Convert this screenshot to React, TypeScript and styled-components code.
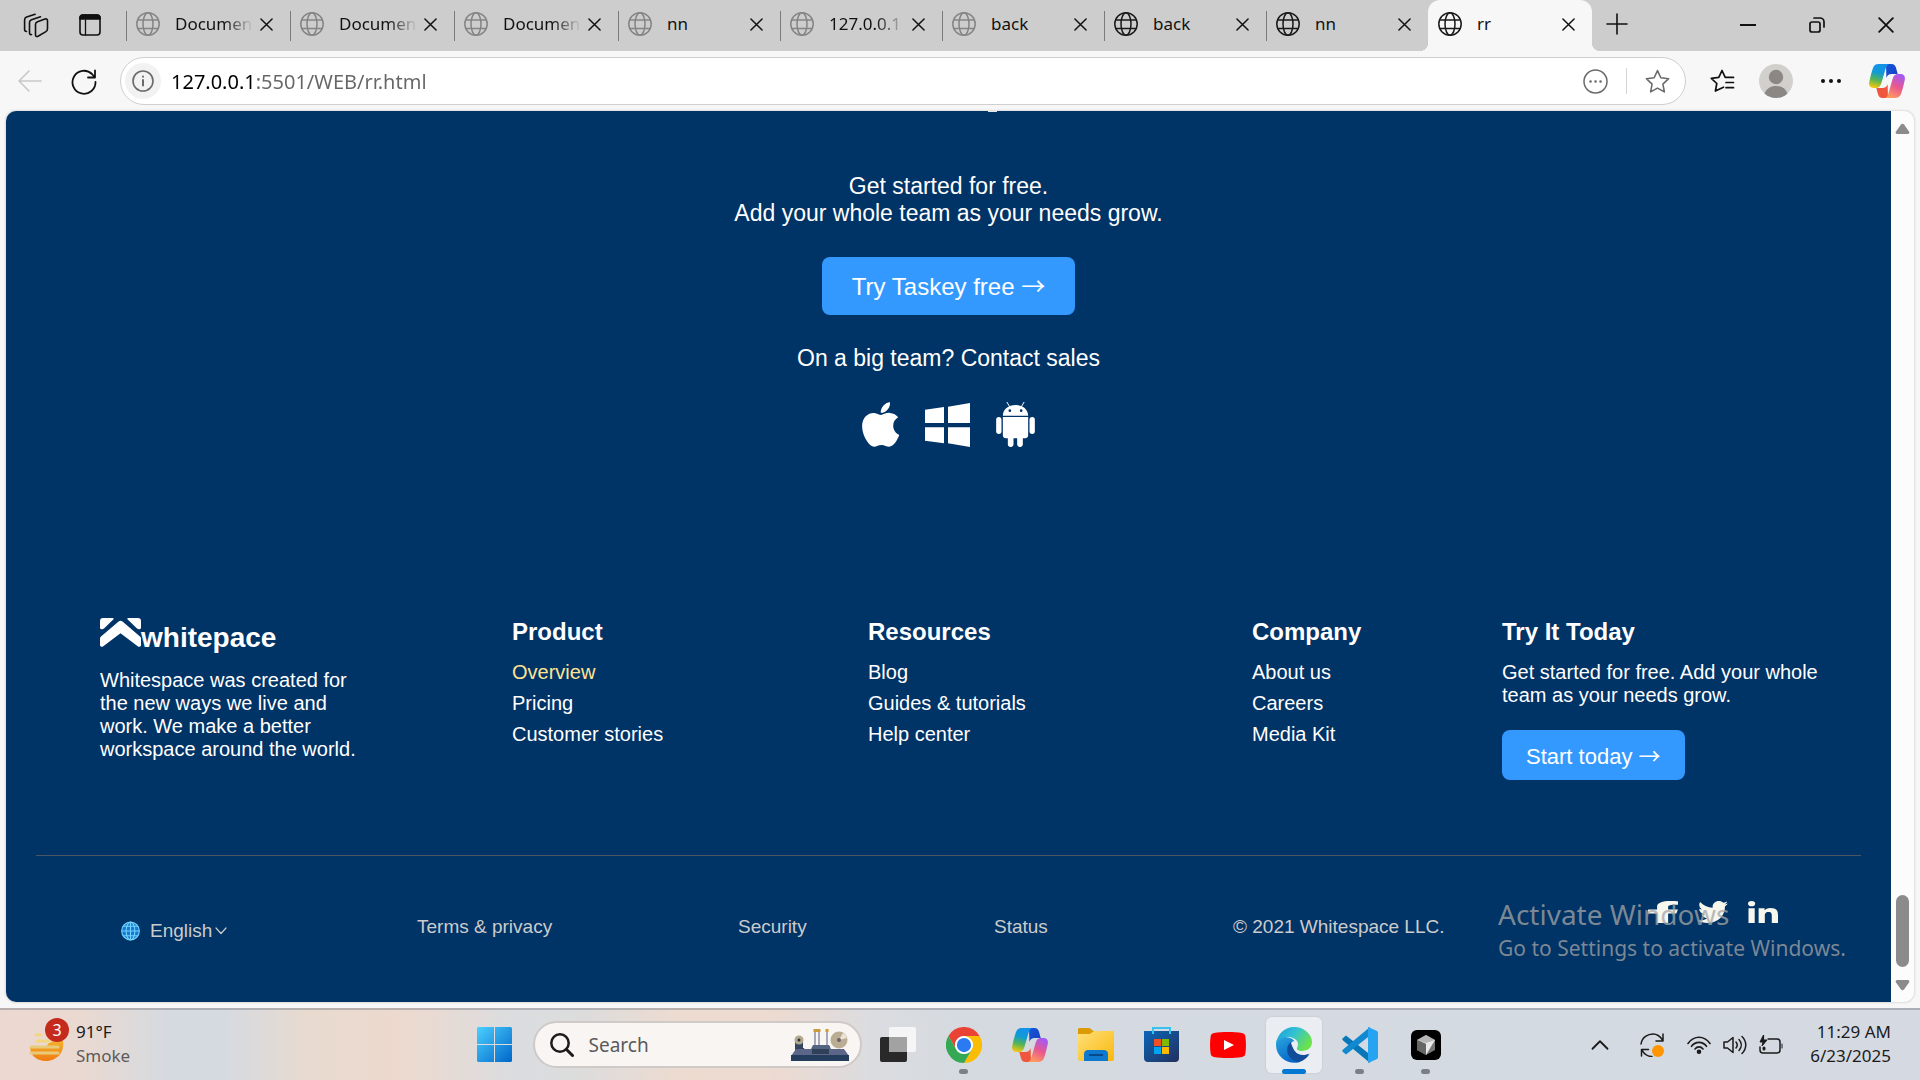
import React from "react";
import styled, { createGlobalStyle, css } from "styled-components";
import { FaApple, FaFacebookF, FaLinkedinIn, FaTwitter } from "react-icons/fa";

const ui = `"Noto Sans", "Open Sans", sans-serif`;
const web = `"Liberation Sans", Arial, sans-serif`;

const GlobalStyle = createGlobalStyle`
  *, *::before, *::after { box-sizing: border-box; }
  body { margin: 0; background: #f7f7f7; font-family: ${ui}; }
  button, input, select { font: inherit; color: inherit; margin: 0; padding: 0; border: 0; background: none; }
  h3, p, ul { margin: 0; padding: 0; }
  ul { list-style: none; }
  a { color: inherit; text-decoration: none; }
  svg { display: block; flex: none; }
`;

const Screen = styled.div`
  display: flex;
  flex-direction: column;
  height: 100vh;
  overflow: hidden;
`;

const IconButton = styled.button<{ $w?: number; $h?: number }>`
  display: grid;
  place-items: center;
  flex: none;
  width: ${(p) => p.$w ?? 24}px;
  height: ${(p) => p.$h ?? 24}px;
`;

/* ---------- tab strip ---------- */

const TabStrip = styled.header`
  display: flex;
  flex: none;
  height: 51px;
  background: #cdcdcd;
  color: #111;
`;

const StripTools = styled.div`
  display: flex;
  width: 126px;
  padding: 0 0 2px 9px;
  align-items: center;
`;

const Tab = styled.div<{ $wide?: boolean; $active?: boolean }>`
  position: relative;
  display: flex;
  align-items: center;
  width: ${(p) => (p.$wide ? 164 : 162)}px;
  padding: 0 13px 3px 10px;
  font-size: 17px;
  line-height: 24px;
  &::before {
    content: "";
    position: absolute;
    left: 0;
    top: 11px;
    width: 1px;
    height: 30px;
    background: #7b7b7b;
  }
  ${(p) =>
    p.$active &&
    css`
      background: #f7f7f7;
      border-radius: 12px 12px 0 0;
      &::before, &::after {
        content: "";
        position: absolute;
        top: auto;
        bottom: 0;
        width: 8px;
        height: 8px;
      }
      &::before {
        left: -8px;
        background: radial-gradient(circle at 0 0, transparent 8px, #f7f7f7 8px);
      }
      &::after {
        right: -8px;
        background: radial-gradient(circle at 100% 0, transparent 8px, #f7f7f7 8px);
      }
    `}
`;

const TabTitle = styled.span<{ $fade?: boolean }>`
  flex: 1;
  min-width: 0;
  margin-left: 15px;
  overflow: hidden;
  white-space: nowrap;
  ${(p) => p.$fade && css`mask-image: linear-gradient(90deg, #000 60%, transparent 98%);`}
`;

const NewTab = styled(IconButton)`
  margin: 12px 0 0 13px;
`;

const WindowControls = styled.div`
  display: flex;
  margin-left: auto;
`;

/* ---------- toolbar ---------- */

const Toolbar = styled.div`
  display: flex;
  flex: none;
  align-items: center;
  height: 60px;
  background: #f7f7f7;
  color: #111;
`;

const AddressBar = styled.form`
  display: flex;
  flex: 1;
  align-items: center;
  height: 48px;
  margin-left: 13px;
  padding: 0 10px 0 4px;
  border: 1px solid #cfcfcf;
  border-radius: 24px;
  background: #fff;
  color: #6a6a6a;
`;

const SiteInfo = styled(IconButton)`
  border-radius: 50%;
  background: #f2f2f2;
`;

const Address = styled.input`
  flex: 1;
  min-width: 0;
  height: 36px;
  margin-left: 10px;
  color: #666;
  font-size: 20px;
  outline: none;
  background: linear-gradient(90deg, #000 81px, #666 81px);
  background-clip: text;
  -webkit-background-clip: text;
  -webkit-text-fill-color: transparent;
`;

const AddressDivider = styled.span`
  width: 1px;
  height: 26px;
  margin: 0 12px 0 12px;
  background: #d5d5d5;
`;

const ToolbarEnd = styled.div`
  display: flex;
  align-items: center;
  gap: 19px;
  margin: 0 15px 0 18px;
`;

/* ---------- page ---------- */

const Viewport = styled.main`
  position: relative;
  display: flex;
  flex: 1;
  min-height: 0;
  margin: 0 6px 6px;
  border-radius: 10px;
  overflow: hidden;
  background: #fcfcfc;
  box-shadow: 0 0 2px 1px #dcdcdc;
`;

const Page = styled.div`
  flex: 1;
  min-width: 0;
  background: #003366;
  color: #fff;
  font-family: ${web};
`;

const HeadingTail = styled.div`
  width: 9px;
  height: 1px;
  margin-left: calc(50% + 39px);
  background: #dfe6ec;
`;

const Hero = styled.section`
  display: flex;
  flex-direction: column;
  align-items: center;
  padding-top: 61px;
  font-size: 23px;
  line-height: 27px;
  text-align: center;
`;

const Arrow = styled.span`
  font-family: "Noto Sans CJK SC", ${web};
  line-height: 1;
`;

const HeroButton = styled.button`
  height: 58px;
  margin: 30px 0 30px;
  padding: 0 30px;
  border-radius: 8px;
  background: #3399ff;
  font-size: 24px;
`;

const Platforms = styled.div`
  display: flex;
  align-items: center;
  gap: 26px;
  margin-top: 30px;
  svg:first-child { width: 37px; height: 45px; }
`;

const FooterGrid = styled.footer`
  display: grid;
  grid-template-columns: 412fr 356fr 384fr 250fr 389fr;
  align-items: start;
  margin-top: 171px;
  padding-left: 94px;
  font-size: 20px;
  line-height: 23px;
`;

const Brand = styled.div`
  display: flex;
  height: 37px;
  margin-bottom: 14px;
  font-size: 28px;
  font-weight: 700;
  line-height: 40px;
`;

const About = styled.p`
  max-width: 270px;
`;

const ColumnTitle = styled.h3`
  margin-bottom: 16px;
  font-size: 24px;
  line-height: 27px;
`;

const Links = styled.ul`
  display: grid;
  gap: 8px;
`;

const FooterLink = styled.a<{ $current?: boolean }>`
  color: ${(p) => (p.$current ? "#ffe492" : "#fff")};
`;

const Pitch = styled.p`
  max-width: 340px;
`;

const StartButton = styled.button`
  height: 50px;
  margin-top: 23px;
  padding: 0 24px;
  border-radius: 8px;
  background: #3399ff;
  font-size: 22px;
`;

const Legal = styled.div`
  display: grid;
  grid-template-columns: 296fr 321fr 256fr 239fr 415fr 213fr;
  align-items: start;
  margin: 75px 30px 0;
  padding: 45px 0 0 85px;
  border-top: 1px solid #4a5663;
  color: #ccc;
  font-size: 19px;
  line-height: 22px;
`;

const LegalItem = styled.div`
  padding-top: 15px;
`;

const Language = styled.label`
  display: flex;
  align-items: center;
  gap: 10px;
  padding-top: 19px;
  svg:last-child { margin-left: -8px; }
`;

const LanguageSelect = styled.select`
  appearance: none;
`;

const Social = styled.div`
  display: flex;
  gap: 20px;
  color: #f7f7ee;
  svg { height: 22px; width: 30px; }
`;

const Watermark = styled.div`
  position: absolute;
  right: 74px;
  bottom: 38px;
  width: 342px;
  color: rgba(165, 165, 165, 0.75);
  font-size: 28px;
  line-height: 36px;
  white-space: nowrap;
  pointer-events: none;
`;

const WatermarkHint = styled.div`
  font-size: 21px;
  line-height: 32px;
`;

const ScrollTrack = styled.div`
  display: flex;
  flex-direction: column;
  align-items: center;
  flex: none;
  width: 23px;
  padding: 9px 0;
  color: #8b8b8b;
`;

const ScrollThumb = styled.div`
  width: 13px;
  height: 72px;
  margin: auto 0 12px;
  border-radius: 7px;
  background: #8b8b8b;
`;

/* ---------- taskbar ---------- */

const Taskbar = styled.footer`
  display: grid;
  grid-template-columns: 1fr auto 1fr;
  align-items: center;
  flex: none;
  height: 72px;
  border-top: 2px solid rgba(120, 125, 130, 0.45);
  background: linear-gradient(90deg, #ecd8d0 0, #ead9d1 80px, #d5dae0 170px, #d5dae1 220px,
    #e8dacf 310px, #edd9ce 400px, #dadde0 520px, #dcdcdc 580px, #eddbd0 680px, #eddad0 770px,
    #dadce0 880px, #d4dae0 980px, #d5dae2 100%);
  background-clip: border-box;
  color: #1b1b1b;
  font-size: 17px;
  line-height: 24px;
`;

const Weather = styled.button`
  display: flex;
  align-items: center;
  gap: 4px;
  justify-self: start;
  margin-left: 28px;
  padding-bottom: 3px;
  text-align: left;
`;

const Muted = styled.div`
  color: #5c5c5c;
`;

const Dock = styled.nav`
  display: flex;
  align-items: center;
  padding-bottom: 1px;
`;

const DockItem = styled.button<{ $active?: boolean; $running?: boolean }>`
  position: relative;
  display: grid;
  place-items: center;
  width: 56px;
  height: 56px;
  margin: 0 5px;
  border-radius: 6px;
  ${(p) => p.$active && css`background: #eaedf2; box-shadow: 0 0 1px 1px #cdd1d8;`}
  ${(p) =>
    (p.$active || p.$running) &&
    css`
      &::after {
        content: "";
        position: absolute;
        bottom: -1px;
        width: ${p.$active ? 24 : 9}px;
        height: 5px;
        border-radius: 3px;
        background: ${p.$active ? "#0078d4" : "#7c7f83"};
      }
    `}
`;

const SearchBox = styled.label`
  display: flex;
  align-items: center;
  width: 329px;
  height: 47px;
  margin: 0 3px 0 5px;
  padding: 0 11px 0 15px;
  border: 2px solid #cfcac8;
  border-radius: 24px;
  background: #f8f5f3;
`;

const SearchInput = styled.input`
  flex: 1;
  min-width: 0;
  margin-left: 15px;
  font-size: 19px;
  outline: none;
  &::placeholder { color: #5a5a5a; opacity: 1; }
`;

const Tray = styled.div`
  display: flex;
  align-items: center;
  justify-self: end;
  gap: 12px;
  margin-right: 29px;
`;

const Clock = styled.time`
  margin-left: 15px;
  padding-bottom: 2px;
  text-align: right;
`;

/* ---------- drawings ---------- */

const line = { fill: "none", stroke: "currentColor", strokeLinecap: "round", strokeLinejoin: "round" } as const;

const Globe = ({ color = "#1a1a1a", size = 24 }: { color?: string; size?: number }) => (
  <svg width={size} height={size} viewBox="0 0 24 24" fill="none" stroke={color} strokeWidth="1.5">
    <circle cx="12" cy="12" r="11.2" />
    <ellipse cx="12" cy="12" rx="5" ry="11.2" />
    <path d="M1.7 8h20.6M1.7 16.4h20.6" />
  </svg>
);

const CloseIcon = ({ size = 14 }: { size?: number }) => (
  <svg width={size} height={size} viewBox="0 0 14 14" {...line} strokeWidth="1.6">
    <path d="M1 1l12 12M13 1L1 13" />
  </svg>
);

const Workspaces = () => (
  <svg width="26" height="26" viewBox="0 0 26 26" {...line} strokeWidth="1.6">
    <path d="M12.500 11.500c0-1.400.7-2.300 2-2.800l7.500-2.700c1.600-.5 2.500.2 2.500 1.700v8c0 1.500-.6 2.500-2 3.200l-7.500 4.300c-1.600.8-2.500.2-2.500-1.500z" />
    <path d="M8.500 21.500c-1.300.3-2-.3-2-1.700V9.500c0-1.500.6-2.300 2-2.800l9-3" />
    <path d="M3.500 18.500c-1.300 0-1.900-.6-1.900-1.900V7c0-1.500.6-2.400 2-2.900l8.500-2.900" />
  </svg>
);

const TabActions = () => (
  <svg width="22" height="22" viewBox="0 0 22 22" {...line} strokeWidth="1.6">
    <rect x="1" y="1" width="20" height="20" rx="3" />
    <path d="M1 5V4a3 3 0 013-3h14a3 3 0 013 3v1z" fill="currentColor" />
    <path d="M6.500 6v15" strokeWidth="1.300" />
  </svg>
);

const STAR = "M12 1.500l3.200 6.900 7.500.9-5.500 5.200 1.400 7.500L12 18.300 5.400 22l1.400-7.500L1.300 9.300l7.500-.9z";

const CopilotLogo = ({ id }: { id: string }) => (
  <svg width="36" height="34" viewBox="0 0 36 34">
    <defs>
      <linearGradient id={`${id}a`} x1="0.500" y1="0" x2="0.300" y2="1">
        <stop offset="0" stopColor="#1591ea" />
        <stop offset=".35" stopColor="#109bd5" />
        <stop offset=".65" stopColor="#50b35a" />
        <stop offset="1" stopColor="#f8c70a" />
      </linearGradient>
      <linearGradient id={`${id}b`} x1="0.700" y1="0" x2="0.300" y2="1">
        <stop offset="0" stopColor="#a259f5" />
        <stop offset=".5" stopColor="#e9588f" />
        <stop offset="1" stopColor="#ff9c5c" />
      </linearGradient>
      <linearGradient id={`${id}c`} x1="0" y1="0" x2="1" y2="1">
        <stop offset="0" stopColor="#1456d9" />
        <stop offset="1" stopColor="#1b3fc0" />
      </linearGradient>
    </defs>
    <path d="M17 0h5.500c2.500 0 3.800 1.400 4.500 3.700L28.700 10h-6c-3 0-4.500 1.200-5.300 4z" fill={`url(#${id}c)`} />
    <path d="M19 34h-5.500c-2.500 0-3.800-1.400-4.500-3.700L7.300 24h6c3 0 4.500-1.200 5.300-4z" fill="#f0553d" />
    <path d="M9.500 0H20c-2 .8-2.800 2.500-3.600 5.300L12.700 18c-1 3.800-2.400 6-5.700 6H4.500C.8 24-.5 21.300.3 17.700 1.200 13.500 2.400 8.500 3.800 4.400 4.800 1.500 6.500 0 9.500 0z" fill={`url(#${id}a)`} />
    <path d="M26.500 34H16c2-.8 2.800-2.500 3.600-5.300L23.300 16c1-3.800 2.400-6 5.700-6h2.500c3.700 0 5 2.700 4.200 6.300-.9 4.200-2.100 9.200-3.500 13.300-1 2.900-2.700 4.400-5.700 4.400z" fill={`url(#${id}b)`} />
  </svg>
);

const WindowsGlyph = () => (
  <svg width="45" height="44" viewBox="0 0 135 132" fill="currentColor">
    <path d="M0 20l57-8v48H0zM69 11L135 0v60H69zM0 73h57v48L0 113zM69 73h66v59L69 121z" />
  </svg>
);

const AndroidGlyph = () => (
  <svg width="39" height="45" viewBox="0 0 116 135" fill="currentColor">
    <path d="M32 0l9 15M84 0l-9 15" stroke="currentColor" strokeWidth="3" />
    <path d="M20 41C20 22 37 9 58 9s38 13 38 32zM41 22a4 4 0 100 8 4 4 0 000-8zm34 0a4 4 0 100 8 4 4 0 000-8z" fillRule="evenodd" />
    <path d="M20 45h76v55c0 5-4 9-9 9h-7v18c0 11-17 11-17 0v-18H52v18c0 11-17 11-17 0v-18h-6c-5 0-9-4-9-9z" />
    <rect y="45" width="16" height="51" rx="8" />
    <rect x="100" y="45" width="16" height="51" rx="8" />
  </svg>
);

const BrandMark = () => (
  <svg width="41" height="29" viewBox="0 0 41 29" fill="currentColor">
    <path d="M0 3a3 3 0 013-3h9.500c1.400 0 1.600.8.800 1.600L4 10.500C3 11.600 0 12 0 9.500zM41 3a3 3 0 00-3-3h-9.500c-1.400 0-1.600.8-.8 1.600l9.300 8.900c1 1.100 4 1.500 4-1z" />
    <path d="M18.600 3.600a3 3 0 013.900 0L40 18.400c.7.600 1 1.200 1 2V27c0 1.700-1.800 2.500-3.300 1.300L20.500 15.200 3.300 28.300C1.800 29.500 0 28.700 0 27v-6.600c0-.8.300-1.400 1-2z" />
  </svg>
);

const WebGlobe = () => (
  <svg width="19" height="20" viewBox="0 0 20 20" fill="#1976d2" stroke="#6fd3fb" strokeWidth="1.200">
    <circle cx="10" cy="10" r="9.300" />
    <ellipse cx="10" cy="10" rx="4.600" ry="9.300" />
    <path d="M10 .7v18.600M.7 10h18.600M2.500 5h15M2.500 15h15" />
  </svg>
);

const Chevron = ({ up, size = 12 }: { up?: boolean; size?: number }) => (
  <svg width={size} height={(size * 2) / 3} viewBox="0 0 12 8" {...line} strokeWidth="1.200">
    <path d={up ? "M1 6.500l5-5 5 5" : "M1 1l5 5.500L11 1"} />
  </svg>
);

const WeatherIcon = () => (
  <svg width="44" height="52" viewBox="0 0 44 52">
    <defs>
      <linearGradient id="sun" x1="0" y1="0" x2="0" y2="1">
        <stop offset="0" stopColor="#f5b12a" />
        <stop offset="1" stopColor="#ef7a13" />
      </linearGradient>
    </defs>
    <path d="M2 30l17-2c1-4 5-5 16-5 2 13-8 20-17 20C9 43 3 38 2 30z" fill="url(#sun)" />
    <g stroke="#f3d680" strokeWidth="3" strokeLinecap="round">
      <path d="M8 17h5M9 23h12" />
      <path d="M3 29h27M3 35h27" stroke="#e8cb7a" />
    </g>
    <circle cx="29" cy="12" r="12" fill="#c42b1c" />
    <text x="29" y="18" fill="#fff" fontSize="16" textAnchor="middle" fontFamily="Noto Sans">3</text>
  </svg>
);

const StartLogo = () => (
  <svg width="35" height="35" viewBox="0 0 35 35">
    <defs>
      <linearGradient id="start" x1="0" y1="0" x2="1" y2="1">
        <stop offset="0" stopColor="#4bd0ff" />
        <stop offset="1" stopColor="#0067c9" />
      </linearGradient>
    </defs>
    <path fill="url(#start)" d="M1 0h16v17H0V1zM18 0h16l1 1v16H18zM0 18h17v17H1l-1-1zM18 18h17v16l-1 1H18z" />
  </svg>
);

const Machine = () => (
  <svg width="58" height="32" viewBox="0 0 58 32">
    <path d="M5 19h8l2 5H5zM22 17h17v8H22z" fill="#344863" />
    <path d="M22 16h16l3 6H19z" fill="#526480" />
    <path d="M24 2v14M28 2v14M36 2v14" stroke="#a7a9ba" strokeWidth="2" />
    <path d="M22.500 1.500h7M34.500 1.500h3" stroke="#c99b3c" strokeWidth="3" />
    <path d="M4 12h8v9H4z" fill="#33465e" />
    <circle cx="8" cy="11" r="4.500" fill="#b3a88b" /><circle cx="8" cy="11" r="1.500" fill="#29323f" />
    <circle cx="48" cy="11" r="8.500" fill="#b9ae93" /><path d="M48 11l4-7a8.500 8.500 0 014 5z" fill="#ece5d3" /><circle cx="48" cy="11" r="2" fill="#765d6d" />
    <path d="M5 20h48l5 7H0z" fill="#5b6688" />
    <path d="M21 20h17v5H21z" fill="#2f4059" />
    <path d="M0 26h58v6H0z" fill="#243d5c" />
  </svg>
);

const TaskView = () => (
  <svg width="36" height="35" viewBox="0 0 36 35">
    <rect y="10" width="27" height="25" rx="2" fill="#292929" />
    <rect x="9" width="27" height="25" rx="2" fill="#f5f5f5" />
    <path d="M9 10h18v15H9z" fill="#a2a2a2" />
  </svg>
);

const Chrome = () => (
  <svg width="36" height="36" viewBox="0 0 48 48">
    <path d="M3.200 12A24 24 0 0144.800 12H24a12 12 0 00-10.400 18z" fill="#ea4335" />
    <path d="M44.800 12A24 24 0 0124 48l10.400-18A12 12 0 0034.400 18L24 12z" fill="#fbbc04" />
    <path d="M3.200 12A24 24 0 0024 48l10.400-18a12 12 0 01-20.800 0z" fill="#34a853" />
    <circle cx="24" cy="24" r="12" fill="#fff" /><circle cx="24" cy="24" r="9.500" fill="#2a7bf1" />
  </svg>
);

const Folder = () => (
  <svg width="36" height="33" viewBox="0 0 36 33">
    <defs>
      <linearGradient id="folder" x1="0" y1="0" x2="1" y2="1">
        <stop offset="0" stopColor="#ffe07a" /><stop offset="1" stopColor="#f9b80d" />
      </linearGradient>
    </defs>
    <path d="M0 10V1l1-1h10c2 0 3 3 5 3h5v7z" fill="#dc9b06" />
    <path d="M0 6h11c3 0 3-3 6-3h18l1 1v27l-1 2H1l-1-2z" fill="url(#folder)" />
    <path d="M6 33v-7c0-3 2-4 4-4h16c2 0 4 1 4 4v7z" fill="#0f78cf" />
    <path d="M11 27h14" stroke="#084a88" strokeWidth="2" />
  </svg>
);

const Store = () => (
  <svg width="35" height="35" viewBox="0 0 35 35">
    <defs>
      <linearGradient id="store" x1="0" y1="0" x2="1" y2="1">
        <stop offset="0" stopColor="#0b66b8" /><stop offset="1" stopColor="#23305d" />
      </linearGradient>
    </defs>
    <path d="M0 4h35v27a4 4 0 01-4 4H4a4 4 0 01-4-4z" fill="url(#store)" />
    <path d="M9 7V1h17v6" fill="none" stroke="#37c1f0" strokeWidth="2" />
    <path d="M10 12h7v7h-7z" fill="#f25022" /><path d="M18 12h7v7h-7z" fill="#7fba00" />
    <path d="M10 20h7v7h-7z" fill="#00a4ef" /><path d="M18 20h7v7h-7z" fill="#ffb900" />
  </svg>
);

const YouTube = () => (
  <svg width="36" height="26" viewBox="0 0 36 26">
    <path d="M4 1c8-1.300 20-1.300 28 0 2 .3 3 1.500 3.300 3 .9 6 .9 12 0 18-.3 1.500-1.300 2.700-3.300 3-8 1.300-20 1.300-28 0-2-.3-3-1.500-3.300-3-.9-6-.9-12 0-18C1 2.500 2 1.300 4 1z" fill="#f00" />
    <path d="M14 8l10 5-10 5z" fill="#fff" />
  </svg>
);

const Edge = () => (
  <svg width="36" height="36" viewBox="0 0 36 36">
    <defs>
      <linearGradient id="edgeTop" x1="0" y1="0" x2="1" y2=".5">
        <stop offset="0" stopColor="#1a9ad8" /><stop offset=".5" stopColor="#32c1d5" /><stop offset="1" stopColor="#6ae24b" />
      </linearGradient>
      <linearGradient id="edgeLeft" x1="0" y1="0" x2=".5" y2="1">
        <stop offset="0" stopColor="#2aa7df" /><stop offset="1" stopColor="#0668c8" />
      </linearGradient>
    </defs>
    <path d="M0 18C0 8 8 9 14 11c6 2 6 7 5 10l4 14.300C12 38 0 30 0 18z" fill="url(#edgeLeft)" />
    <path d="M15 15c-6 4-6 17 8 20.300 5-1.500 8.500-5 10.500-8.300-5 2.500-12 1.500-14.500-3-2-3.500-1.200-5.500.5-7z" fill="#114c9b" />
    <path d="M0 17C1 7 9 0 18 0c11 0 18 8 18 15 0 6-5 9-10 9-4 0-6-1.500-5-3 1.600-2.500 1.500-7.500-3-9.500C10 8 2 11 0 17z" fill="url(#edgeTop)" />
    <path d="M15 16c2-3 6-1.500 6.500.5.400 2-1.300 3.500-.9 5.200.5 2 5 3.500 11 1.300l1.900 4c-6 2.500-12.500 1-14.800-3-1.800-2.500-2.700-5.500-3.700-8z" fill="#eaedf2" />
    <path d="M33.500 26.500c-5 2.500-12 2-15-2.500l-1.500 5c5 3.500 12 4 16.500-2.500z" fill="#114c9b" />
  </svg>
);

const VSCode = () => (
  <svg width="36" height="36" viewBox="0 0 36 36">
    <path d="M1 11l3-2.500 24 19V36L1 13.500c-1-.9-1-1.800 0-2.500z" fill="#0877b9" />
    <path d="M1 25l3 2.500 24-19V0L1 22.500c-1 .9-1 1.800 0 2.500z" fill="#1188cf" />
    <path d="M26 0l8 3.500c1.500.7 2 1.300 2 2.500v24c0 1.200-.5 1.800-2 2.500L26 36z" fill="#26a4f2" />
  </svg>
);

const CursorApp = () => (
  <svg width="30" height="30" viewBox="0 0 30 30">
    <rect width="30" height="30" rx="6" fill="#000" />
    <path d="M15 5l9 5v10l-9 5-9-5V10z" fill="#777" />
    <path d="M6 10h18l-9 15V14z" fill="#e9e9e9" /><path d="M6 10l9-5 9 5-9 3z" fill="#b5b5b5" /><path d="M6 10l9 4v11l-9-5z" fill="#666" />
  </svg>
);

const Sync = () => (
  <svg width="24" height="24" viewBox="0 0 24 24" {...line} strokeWidth="1.500">
    <path d="M1 11C2 4 8 1 13 1c4 0 7 2 9.500 6M23 1v7h-7M1.500 23v-6.500h7M2 17c2 4 6 6.500 10 6.500" />
    <circle cx="18" cy="18" r="6" fill="#ff9500" stroke="none" />
  </svg>
);

const Wifi = () => (
  <svg width="24" height="18" viewBox="0 0 24 18" {...line} strokeWidth="1.600">
    <path d="M1 7.500C7-.8 17-.8 23 7.500M4.500 10.300c4-5.200 11-5.200 15 0M8 13c2.200-2.800 5.800-2.800 8 0" />
    <circle cx="12" cy="15.700" r="1.500" fill="currentColor" />
  </svg>
);

const Volume = () => (
  <svg width="24" height="20" viewBox="0 0 24 20" {...line} strokeWidth="1.500">
    <path d="M1 7v6h3.500L10 17.500v-15L4.500 7zM13 7c1.500 1.800 1.500 4.200 0 6M16 4.500c3 3.300 3 7.700 0 11M19 1.500c5 5 5 12 0 17" />
  </svg>
);

const Battery = () => (
  <svg width="24" height="20" viewBox="0 0 24 20" {...line} strokeWidth="1.500">
    <path d="M9 4h9a3 3 0 013 3v8a3 3 0 01-3 3H4a3 3 0 01-3-3v-3" />
    <path d="M23 9v4M4.500 0L1 7h3l-1 4 5-6H5z" fill="currentColor" strokeWidth="1" />
    <path d="M5 13v1" strokeWidth="3" />
  </svg>
);

/* ---------- data ---------- */

const tabs = [
  { title: "Document", dim: true, wide: true, fade: true },
  { title: "Document", dim: true, wide: true, fade: true },
  { title: "Document", dim: true, wide: true, fade: true },
  { title: "nn", dim: true },
  { title: "127.0.0.1", dim: true, fade: true },
  { title: "back", dim: true },
  { title: "back" },
  { title: "nn" },
  { title: "rr", wide: true, active: true },
];

const columns = [
  { title: "Product", links: ["Overview", "Pricing", "Customer stories"] },
  { title: "Resources", links: ["Blog", "Guides & tutorials", "Help center"] },
  { title: "Company", links: ["About us", "Careers", "Media Kit"] },
];

const apps = [
  { name: "Task view", icon: <TaskView /> },
  { name: "Chrome", icon: <Chrome />, running: true },
  { name: "Copilot", icon: <CopilotLogo id="dock" /> },
  { name: "File Explorer", icon: <Folder /> },
  { name: "Store", icon: <Store /> },
  { name: "YouTube", icon: <YouTube /> },
  { name: "Edge", icon: <Edge />, active: true },
  { name: "Visual Studio Code", icon: <VSCode />, running: true },
  { name: "Cursor", icon: <CursorApp />, running: true },
];

const BrowserTabs = () => (
  <TabStrip>
    <StripTools>
      <IconButton $w={54} aria-label="Workspaces"><Workspaces /></IconButton>
      <IconButton $w={54} aria-label="Tab actions"><TabActions /></IconButton>
    </StripTools>
    {tabs.map((t, i) => (
      <Tab key={i} $wide={t.wide} $active={t.active}>
        <Globe color={t.dim ? "#858585" : "#1a1a1a"} />
        <TabTitle $fade={t.fade}>{t.title}</TabTitle>
        <IconButton $w={22} aria-label="Close tab"><CloseIcon size={13} /></IconButton>
      </Tab>
    ))}
    <NewTab aria-label="New tab">
      <svg width="22" height="22" viewBox="0 0 22 22" {...line} strokeWidth="1.600"><path d="M11 1v20M1 11h20" /></svg>
    </NewTab>
    <WindowControls>
      <IconButton $w={69} $h={50} aria-label="Minimize">
        <svg width="16" height="2"><path d="M0 1h16" stroke="currentColor" strokeWidth="2" /></svg>
      </IconButton>
      <IconButton $w={69} $h={50} aria-label="Restore">
        <svg width="16" height="16" viewBox="0 0 16 16" {...line} strokeWidth="1.700">
          <rect x="1" y="5" width="10" height="10" rx="2" /><path d="M5 1h6a4 4 0 014 4v5" />
        </svg>
      </IconButton>
      <IconButton $w={69} $h={50} aria-label="Close window"><CloseIcon size={16} /></IconButton>
    </WindowControls>
  </TabStrip>
);

const BrowserToolbar = () => (
  <Toolbar>
    <IconButton $w={60} aria-label="Back">
      <svg width="24" height="22" viewBox="0 0 24 22" {...line} stroke="#c8c8c8" strokeWidth="1.600"><path d="M23 11H1M11 1L1 11l10 10" /></svg>
    </IconButton>
    <IconButton $w={47} aria-label="Reload">
      <svg width="26" height="26" viewBox="0 0 26 26" {...line} strokeWidth="1.800"><path d="M24.500 13A11.500 11.500 0 1121 5l2.500 3M24 1.500v7h-7" /></svg>
    </IconButton>
    <AddressBar onSubmit={(e) => e.preventDefault()}>
      <SiteInfo $w={36} $h={36} type="button" aria-label="Site information">
        <svg width="22" height="22" viewBox="0 0 22 22" {...line} strokeWidth="1.600"><circle cx="11" cy="11" r="10" /><path d="M11 10v5.500M11 6.500v.2" strokeWidth="2" /></svg>
      </SiteInfo>
      <Address aria-label="Address" defaultValue="127.0.0.1:5501/WEB/rr.html" spellCheck={false} />
      <IconButton $w={38} type="button" aria-label="Page actions">
        <svg width="25" height="25" viewBox="0 0 25 25" {...line} strokeWidth="1.500">
          <circle cx="12.500" cy="12.500" r="11.500" /><path d="M7.500 12.500h.1M12.500 12.500h.1M17.500 12.500h.1" strokeWidth="2.500" />
        </svg>
      </IconButton>
      <AddressDivider />
      <IconButton $w={36} type="button" aria-label="Add to favorites">
        <svg width="25" height="25" viewBox="0 0 24 24" {...line} strokeWidth="1.500"><path d={STAR} /></svg>
      </IconButton>
    </AddressBar>
    <ToolbarEnd>
      <IconButton $w={36} aria-label="Favorites">
        <svg width="25" height="24" viewBox="0 0 25 24" {...line} strokeWidth="1.700">
          <path d="M13.500 18.200L5.400 22l1.400-7.500L1.300 9.300l7.500-.9L12 1.500l3.200 6.900h8.300M16 13.500h7.500M16 18.700h7.500" />
        </svg>
      </IconButton>
      <IconButton $w={34} $h={34} aria-label="Profile">
        <svg width="34" height="34" viewBox="0 0 34 34">
          <circle cx="17" cy="17" r="17" fill="#d2d0cd" /><circle cx="17" cy="13" r="7.200" fill="#8b8784" />
          <path d="M5.500 29.500c2-5 6-7.500 11.500-7.500s9.500 2.500 11.500 7.500a17 17 0 01-23 0z" fill="#8b8784" />
        </svg>
      </IconButton>
      <IconButton $w={38} aria-label="Settings and more">
        <svg width="20" height="4" fill="currentColor"><circle cx="2" cy="2" r="2" /><circle cx="10" cy="2" r="2" /><circle cx="18" cy="2" r="2" /></svg>
      </IconButton>
      <IconButton $w={36} $h={34} aria-label="Copilot"><CopilotLogo id="bar" /></IconButton>
    </ToolbarEnd>
  </Toolbar>
);

const WebPage = () => (
  <Page>
    <HeadingTail />
    <Hero>
      <p>Get started for free.<br />Add your whole team as your needs grow.</p>
      <HeroButton>Try Taskey free <Arrow>→</Arrow></HeroButton>
      <p>On a big team? Contact sales</p>
      <Platforms>
        <FaApple viewBox="3 30 374 452" preserveAspectRatio="none" />
        <WindowsGlyph />
        <AndroidGlyph />
      </Platforms>
    </Hero>
    <FooterGrid>
      <div>
        <Brand><BrandMark />whitepace</Brand>
        <About>Whitespace was created for the new ways we live and work. We make a better workspace around the world.</About>
      </div>
      {columns.map((c) => (
        <div key={c.title}>
          <ColumnTitle>{c.title}</ColumnTitle>
          <Links>
            {c.links.map((l) => (
              <li key={l}><FooterLink href="#" $current={l === "Overview"}>{l}</FooterLink></li>
            ))}
          </Links>
        </div>
      ))}
      <div>
        <ColumnTitle>Try It Today</ColumnTitle>
        <Pitch>Get started for free. Add your whole team as your needs grow.</Pitch>
        <StartButton>Start today <Arrow>→</Arrow></StartButton>
      </div>
    </FooterGrid>
    <Legal>
      <Language>
        <WebGlobe />
        <LanguageSelect aria-label="Language"><option>English</option></LanguageSelect>
        <Chevron />
      </Language>
      <LegalItem><a href="#">Terms &amp; privacy</a></LegalItem>
      <LegalItem><a href="#">Security</a></LegalItem>
      <LegalItem><a href="#">Status</a></LegalItem>
      <LegalItem>© 2021 Whitespace LLC.</LegalItem>
      <Social>
        <a href="#" aria-label="Facebook"><FaFacebookF viewBox="22 0 272 512" preserveAspectRatio="none" /></a>
        <a href="#" aria-label="Twitter"><FaTwitter viewBox="0 48 512 416" preserveAspectRatio="none" /></a>
        <a href="#" aria-label="LinkedIn"><FaLinkedinIn viewBox="0 0 448 448" preserveAspectRatio="none" /></a>
      </Social>
    </Legal>
  </Page>
);

export default function App() {
  return (
    <Screen>
      <GlobalStyle />
      <BrowserTabs />
      <BrowserToolbar />
      <Viewport>
        <WebPage />
        <ScrollTrack>
          <svg width="15" height="14" viewBox="0 0 15 14" fill="currentColor"><path d="M6 4.500c.8-1 2.200-1 3 0l5 7c.8 1.200.2 2.500-1.200 2.500H2.200C.8 14 .2 12.700 1 11.500z" /></svg>
          <ScrollThumb />
          <svg width="15" height="14" viewBox="0 0 15 14" fill="currentColor"><path d="M6 10.500c.8 1 2.200 1 3 0l5-7C14.800 2.300 14.200 1 12.800 1H2.200C.8 1 .2 2.300 1 3.500z" /></svg>
        </ScrollTrack>
        <Watermark>
          Activate Windows
          <WatermarkHint>Go to Settings to activate Windows.</WatermarkHint>
        </Watermark>
      </Viewport>
      <Taskbar>
        <Weather>
          <WeatherIcon />
          <div>91°F<Muted>Smoke</Muted></div>
        </Weather>
        <Dock>
          <DockItem aria-label="Start"><StartLogo /></DockItem>
          <SearchBox>
            <svg width="24" height="24" viewBox="0 0 24 24" {...line} strokeWidth="2.500"><circle cx="10" cy="10" r="8.700" /><path d="M16.500 16.500l6 6" strokeWidth="3" /></svg>
            <SearchInput type="search" placeholder="Search" />
            <Machine />
          </SearchBox>
          {apps.map((a) => (
            <DockItem key={a.name} aria-label={a.name} $active={a.active} $running={a.running}>{a.icon}</DockItem>
          ))}
        </Dock>
        <Tray>
          <IconButton $w={32} aria-label="Show hidden icons"><Chevron up size={18} /></IconButton>
          <IconButton $w={47} aria-label="Updates"><Sync /></IconButton>
          <Wifi />
          <Volume />
          <Battery />
          <Clock>11:29 AM<div>6/23/2025</div></Clock>
        </Tray>
      </Taskbar>
    </Screen>
  );
}
